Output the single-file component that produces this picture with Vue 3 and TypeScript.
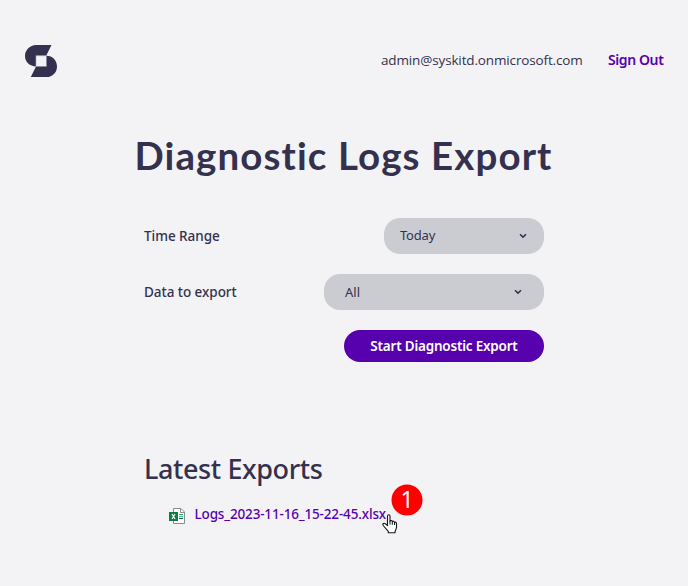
<script setup lang="ts">
import { ref } from 'vue'

const account = ref('admin@syskitd.onmicrosoft.com')
const timeRange = ref('Today')
const dataToExport = ref('All')
const exportsList = ref<string[]>(['Logs_2023-11-16_15-22-45.xlsx'])
</script>

<template>
  <div class="page">
    <header class="topbar">
      <svg class="logo" width="32" height="32" viewBox="0 0 32 32" aria-hidden="true">
        <path d="M11 0H26.5L21.3 10.5H11V21.4C5 21.4 0 17 0 11C0 5 5 0 11 0Z" fill="#34314f" />
        <path d="M21.5 10.8C27.5 10.8 32 15.5 32 21.4C32 27.5 27.5 32 21.5 32H5.8L11 21.5H21.5Z" fill="#34314f" />
        <path d="M10.8 21.5V10.7H21.5V21.5Z" fill="none" stroke="#85849a" stroke-width=".6" />
      </svg>
      <div class="account">
        <span class="email">{{ account }}</span>
        <a class="signout">Sign Out</a>
      </div>
    </header>

    <h1 class="title">Diagnostic Logs Export</h1>

    <main class="content">
      <div class="row">
        <span class="label time-label">Time Range</span>
        <div class="select time">
          <span class="value today">{{ timeRange }}</span>
          <svg width="8" height="6" viewBox="0 0 8 6"><path d="M1 1.2L4 4.1L7 1.2" /></svg>
        </div>
      </div>
      <div class="row">
        <span class="label data-label">Data to export</span>
        <div class="select data">
          <span class="value">{{ dataToExport }}</span>
          <svg width="8" height="6" viewBox="0 0 8 6"><path d="M1 1.2L4 4.1L7 1.2" /></svg>
        </div>
      </div>
      <button class="start"><span>Start Diagnostic Export</span></button>

      <h2 class="subtitle">Latest Exports</h2>
      <div v-for="name in exportsList" :key="name" class="file">
        <svg class="excel" width="16" height="16" viewBox="0 0 16 16">
          <path d="M4.5 .5H12L15.5 4V15.5H4.5Z" fill="#fff" stroke="#8b8b8b" />
          <path d="M11.5 .5V4.5H15.5" fill="none" stroke="#8b8b8b" />
          <path d="M10 6.5H14" stroke="#21a366" />
          <path d="M10 8.5H14" stroke="#33c481" />
          <path d="M10 10.5H14" stroke="#185c37" />
          <rect y="4" width="9" height="9" fill="#107c41" />
          <path d="M3 6L6 11M6 6L3 11" stroke="#fff" stroke-width="1.2" />
        </svg>
        <a class="link">{{ name }}</a>
        <span class="marker"><svg width="32" height="32" viewBox="0 0 32 32">
          <circle cx="16" cy="16" r="15.5" fill="#fe0000" />
          <text x="16" y="24" text-anchor="middle">1</text>
        </svg></span>
        <svg class="cursor" width="16" height="20" viewBox="0 0 16 20">
          <path d="M5.5 11.5V2.2C5.5 .2 8 .2 8 2.2V7.2C8.3 6 10.2 6.3 10.3 7.7C10.8 6.7 12.4 7 12.5 8.5C13.2 7.7 14.5 8.3 14.5 9.8V13.5C14.5 15 13 16.5 13 18V18.8H6.3V17.3L1.2 11.5C.2 9.8 2 8.6 3.4 9.8Z" fill="#fff" stroke="#151515" stroke-width="1.1" stroke-linejoin="round" />
          <path d="M8 7V10.6M10.3 7.8V10.8M12.5 8.5V11" fill="none" stroke="#151515" />
        </svg>
      </div>
    </main>
  </div>
</template>

<style>
body {
  background: #f3f3f5;
}
</style>

<style scoped>
.page {
  box-sizing: border-box;
  height: 586px;
  overflow: hidden;
  background: #f3f3f5;
  color: #34314f;
  font-family: "Noto Sans", "Open Sans", sans-serif;
  font-size: 14px;
  line-height: 20px;
}
.topbar {
  display: flex;
  justify-content: space-between;
  padding: 45px 25px 0;
  height: 32px;
}
.logo {
  display: block;
}
.account {
  display: flex;
  align-items: center;
  height: 30px;
  white-space: nowrap;
}
.email {
  width: 227px;
  font-family: "Open Sans", sans-serif;
  font-size: 13.5px;
  letter-spacing: -0.14px;
}
.signout {
  width: 55px;
  color: #5700ae;
  font-weight: 600;
  letter-spacing: -0.4px;
}
.title {
  margin: 54px 0 0 134.5px;
  height: 48px;
  font: 700 38.5px/48px Lato, sans-serif;
  letter-spacing: 1.1px;
  white-space: nowrap;
}
.content {
  width: 400px;
  margin: 39px 0 0 144px;
}
.row {
  display: flex;
  justify-content: space-between;
  align-items: center;
  height: 36px;
  margin-bottom: 20px;
}
.label {
  font-weight: 500;
  font-size: 13.5px;
  letter-spacing: -0.04px;
}
.select {
  box-sizing: border-box;
  display: flex;
  justify-content: space-between;
  align-items: center;
  height: 36px;
  border-radius: 16px;
  background: #cbccd2;
  font-size: 13px;
}
.select path {
  fill: none;
  stroke: #34314f;
  stroke-width: 1.5;
}
.today {
  margin-top: -2px;
  letter-spacing: -0.2px;
}
.time {
  width: 160px;
  padding: 0 17px 0 16px;
}
.data {
  width: 220px;
  padding: 0 22px 0 21px;
}
.start {
  display: block;
  width: 200px;
  height: 32px;
  margin: 0 0 0 auto;
  padding: 0;
  border: 0;
  border-radius: 16px;
  background: #5700ae;
  color: #fff;
  font: 600 13.5px/32px "Noto Sans", sans-serif;
  letter-spacing: -0.21px;
  white-space: nowrap;
}
.subtitle {
  margin: 89px 0 0;
  height: 36px;
  font: 500 27px/36px "Noto Sans", sans-serif;
  letter-spacing: -0.4px;
}
.file {
  position: relative;
  display: flex;
  align-items: center;
  height: 20px;
  margin-top: 17px;
  padding-left: 25px;
}
.excel {
  margin-top: 3px;
}
.link {
  margin-left: 9.5px;
  color: #5700ae;
  font-weight: 500;
  font-size: 13.5px;
  letter-spacing: -0.16px;
  white-space: nowrap;
}
.marker {
  position: absolute;
  left: 247px;
  top: -20px;
  height: 32px;
}
.marker text {
  fill: #fff;
  font: 23px "Noto Sans", sans-serif;
}
.cursor {
  position: absolute;
  left: 238px;
  top: 10px;
}
</style>
